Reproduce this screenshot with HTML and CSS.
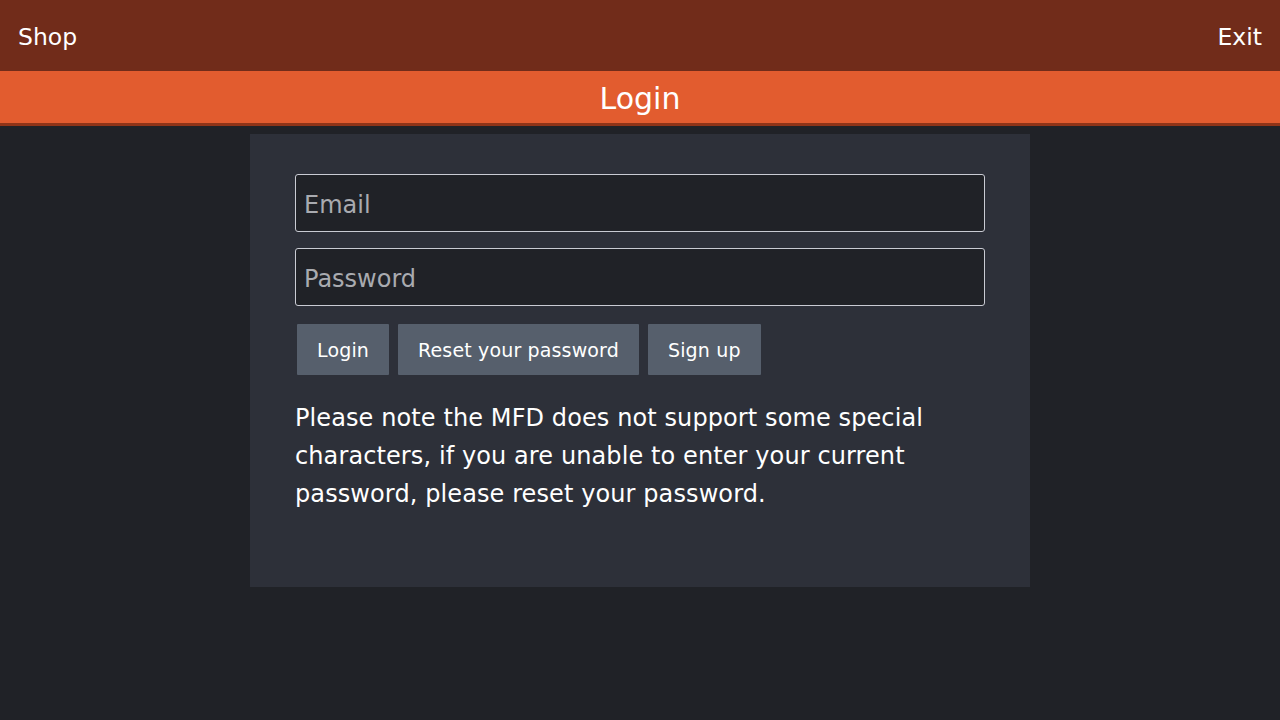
FILE: index.html
```html
<!DOCTYPE html>
<html lang="en">
<head>
  <meta charset="UTF-8" />
  <meta name="viewport" content="width=device-width, initial-scale=1.0" />
  <title>Login</title>
  <link rel="stylesheet" href="styles.css">
</head>
<body>
  <!-- Barra superiore -->
  <div class="top-bar">
    <a class="top-link" href="#">Shop</a>
    <a class="top-link" href="#">Exit</a>
  </div>

  <div class="title-bar">Login</div>

  <div class="main">
    <div class="panel">
      <input class="field" type="text" placeholder="Email" />
      <input class="field" type="password" placeholder="Password" />

      <div class="buttons">
        <button class="btn">Login</button>
        <button class="btn">Reset your password</button>
        <button class="btn">Sign up</button>
      </div>

      <p class="note">
        Please note the MFD does not support some special characters, if you are unable to enter your current password, please reset your password.
      </p>
    </div>
  </div>
</body>
</html>
```

FILE: styles.css
```css
body {
  margin: 0;
  background-color: #202227;
  font-family: "DejaVu Sans", sans-serif;
  color: #fff;
  height: 100vh;
  overflow: hidden;
}

.top-bar {
  height: 71px;
  background-color: #712c1a;
  display: flex;
  align-items: center;
  justify-content: space-between;
  padding: 0 18px 0 18px;
}

.top-link {
  color: #fff;
  text-decoration: none;
  font-size: 23.5px;
  margin-top: 3px;
}

.title-bar {
  height: 52px;
  background-color: #e25c2f;
  border-bottom: 3px solid #8f3418;
  text-align: center;
  font-size: 30px;
  line-height: 55px;
}

.main {
  display: flex;
  justify-content: center;
  padding-top: 8px;
}

.panel {
  width: 690px;
  height: 373px;
  padding: 40px 45px;
  background-color: #2d3039;
  display: flex;
  flex-direction: column;
}

.field {
  box-sizing: border-box;
  width: 690px;
  height: 58px;
  margin: 0 0 16px;
  padding: 3px 8px 0;
  background-color: #202227;
  border: 1px solid #c9cbd3;
  border-radius: 3px;
  color: #fff;
  font-family: "DejaVu Sans", sans-serif;
  font-size: 24px;
  outline: none;
}

.field::placeholder {
  color: #a9abb0;
}

.buttons {
  display: flex;
  gap: 9px;
  margin: 2px 0 0 2px;
}

.btn {
  height: 51px;
  padding: 1px 20px 0;
  background-color: #565f6c;
  border: none;
  border-radius: 1px;
  color: #fff;
  font-family: "DejaVu Sans", sans-serif;
  font-size: 19px;
  letter-spacing: 0.15px;
  cursor: pointer;
}

.note {
  margin: 24px 0 0;
  font-size: 24px;
  letter-spacing: 0.1px;
  line-height: 38px;
  max-width: 660px;
}
```
